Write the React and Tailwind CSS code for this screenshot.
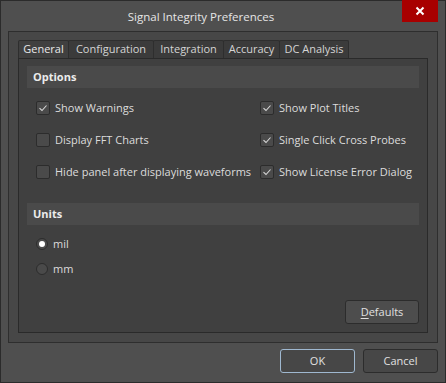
import { useState } from 'react';

const tabs = [
  { name: 'General', w: 'w-[51px]' },
  { name: 'Configuration', w: 'w-[86px]' },
  { name: 'Integration', w: 'w-[71px]' },
  { name: 'Accuracy', w: 'w-[57px]' },
  { name: 'DC Analysis', w: 'w-[70px]' },
];

function Check({ checked, label, onToggle }) {
  return (
    <label className="flex items-center gap-[5px] h-[16px] whitespace-nowrap cursor-default" onClick={onToggle}>
      <span className="w-[14px] h-[14px] rounded-[2px] border border-[#2c2c2c] bg-[#4a4a4a] flex items-center justify-center">
        {checked && (
          <svg width="10" height="10" viewBox="0 0 10 10">
            <path d="M1.5 5.2 L4 7.5 L8.5 2.5" fill="none" stroke="#d8d8d8" strokeWidth="1.1" />
          </svg>
        )}
      </span>
      <span>{label}</span>
    </label>
  );
}

function Radio({ checked, label, onPick }) {
  return (
    <label className="flex items-center gap-[5px] h-[16px] cursor-default" onClick={onPick}>
      <span className="w-[12px] h-[12px] rounded-full border border-[#2c2c2c] bg-[#4a4a4a] flex items-center justify-center">
        {checked && <span className="w-[6px] h-[6px] rounded-full bg-white" />}
      </span>
      <span>{label}</span>
    </label>
  );
}

export default function App() {
  const [opts, setOpts] = useState({
    warnings: true,
    fft: false,
    hide: false,
    titles: true,
    probes: true,
    license: true,
  });
  const [unit, setUnit] = useState('mil');
  const [tab, setTab] = useState('General');
  const toggle = (k) => setOpts({ ...opts, [k]: !opts[k] });

  return (
    <div
      className="w-[446px] h-[383px] bg-[#4f4f4f] border border-[#2b2b2b] flex flex-col text-[11px] text-[#dcdcdc]"
      style={{ fontFamily: '"Open Sans", "Noto Sans", sans-serif' }}
    >
      {/* Title bar */}
      <div className="relative h-[30px] flex items-center justify-center pr-[44px] shrink-0">
        <span className="text-[11.5px] text-[#e6e6e6] mt-[2px]">Signal Integrity Preferences</span>
        <button className="absolute top-[-1px] right-[7px] w-[36px] h-[22px] bg-[#a80000] flex items-center justify-center">
          <svg width="10" height="10" viewBox="0 0 10 10">
            <path d="M1.5 1.5 L8.5 8.5 M8.5 1.5 L1.5 8.5" stroke="white" strokeWidth="2" />
          </svg>
        </button>
      </div>

      {/* Frame */}
      <div className="mx-[7px] h-[312px] border border-[#2e2e2e] bg-[#474747] px-[9px] pt-[8px] flex flex-col">
        {/* Tabs */}
        <div className="flex h-[18px] items-end">
          {tabs.map((t) => (
            <div
              key={t.name}
              onClick={() => setTab(t.name)}
              className={`${t.w} h-[18px] -mr-px flex items-center justify-center whitespace-nowrap border border-b-0 border-[#2e2e2e] rounded-t-[2px] ${
                tab === t.name ? 'bg-[#404040] text-[#e8e8e8]' : 'bg-[#3b3b3b] text-[#d4d4d4]'
              }`}
            >
              {t.name}
            </div>
          ))}
        </div>

        {/* Panel */}
        <div className="h-[275px] border border-[#2a2a2a] bg-[#404040] px-[8px] pt-[7px] flex flex-col">
          <div className="h-[22px] bg-[#4a4a4a] flex items-center px-[6px] font-bold text-[#ececec]">Options</div>
          <div className="grid grid-cols-[224px_1fr] gap-y-[16px] pl-[9px] pt-[12px]">
            <Check checked={opts.warnings} label="Show Warnings" onToggle={() => toggle('warnings')} />
            <Check checked={opts.titles} label="Show Plot Titles" onToggle={() => toggle('titles')} />
            <Check checked={opts.fft} label="Display FFT Charts" onToggle={() => toggle('fft')} />
            <Check checked={opts.probes} label="Single Click Cross Probes" onToggle={() => toggle('probes')} />
            <Check checked={opts.hide} label="Hide panel after displaying waveforms" onToggle={() => toggle('hide')} />
            <Check checked={opts.license} label="Show License Error Dialog" onToggle={() => toggle('license')} />
          </div>

          <div className="h-[22px] bg-[#4a4a4a] flex items-center px-[6px] font-bold text-[#ececec] mt-[23px]">Units</div>
          <div className="flex flex-col gap-[9px] pl-[9px] pt-[11px]">
            <Radio checked={unit === 'mil'} label="mil" onPick={() => setUnit('mil')} />
            <Radio checked={unit === 'mm'} label="mm" onPick={() => setUnit('mm')} />
          </div>

          <div className="mt-auto mb-[8px] flex justify-end">
            <button className="w-[74px] h-[24px] rounded-[3px] border border-[#2c2c2c] bg-[#4d4d4d] text-[#e0e0e0]">
              <span className="underline underline-offset-2">D</span>efaults
            </button>
          </div>
        </div>
      </div>

      {/* Footer */}
      <div className="flex justify-end gap-[8px] pr-[7px] pt-[6px]">
        <button className="w-[75px] h-[24px] rounded-[3px] border border-[#9fb8d0] bg-[#474747] text-[#e0e0e0]">OK</button>
        <button className="w-[75px] h-[24px] rounded-[3px] border border-[#2c2c2c] bg-[#474747] text-[#e0e0e0]">Cancel</button>
      </div>
    </div>
  );
}
